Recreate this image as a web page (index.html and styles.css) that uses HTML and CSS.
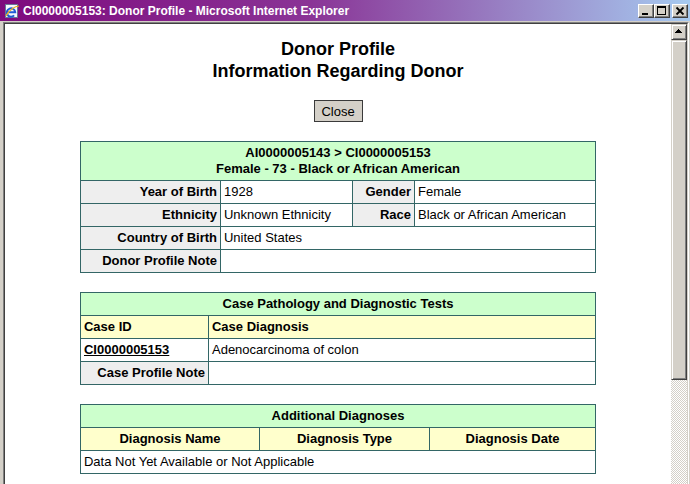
FILE: index.html
```html
<!DOCTYPE html>
<html>
<head>
<meta charset="utf-8">
<title>CI0000005153: Donor Profile</title>
<link rel="stylesheet" href="styles.css">
</head>
<body>
<div class="window">
  <div class="titlebar">
    <svg class="ie-icon" viewBox="0 0 16 16" width="16" height="16">
      <rect x="1.5" y="1.5" width="12" height="13" fill="#f4f8ff" stroke="#6a7a94"/>
      <path d="M3 9.2h8.2a4.2 4.2 0 1 0 -1.1 3.2" fill="none" stroke="#1f5bd6" stroke-width="2"/>
      <path d="M2 13c3-6 9-10 13-10" fill="none" stroke="#f0b020" stroke-width="1.2"/>
    </svg>
    <span class="title-text">CI0000005153: Donor Profile - Microsoft Internet Explorer</span>
    <div class="caption-buttons">
      <span class="cap-btn">
        <svg viewBox="0 0 14 12" width="14" height="12" shape-rendering="crispEdges"><rect x="3" y="8" width="6" height="2" fill="#000"/></svg>
      </span>
      <span class="cap-btn">
        <svg viewBox="0 0 14 12" width="14" height="12" shape-rendering="crispEdges"><path d="M2 1h9v9h-9z M3 3v6h7v-6z" fill="#000" fill-rule="evenodd"/></svg>
      </span>
      <span class="cap-btn cap-close">
        <svg viewBox="0 0 14 12" width="14" height="12"><path d="M3.5 2.5l7 7M10.5 2.5l-7 7" stroke="#000" stroke-width="1.8"/></svg>
      </span>
    </div>
  </div>
  <div class="frame">
    <div class="sunken-outer">
      <div class="sunken-inner">
        <div class="page">
          <h1 class="page-title">Donor Profile<br>Information Regarding Donor</h1>
          <div class="actions"><button class="close-btn" type="button">Close</button></div>

          <table class="data-table">
            <colgroup><col class="c1a"><col class="c1b"><col class="c1c"><col class="c1d"></colgroup>
            <tr><th class="hdr" colspan="4">AI0000005143 &gt; CI0000005153<br>Female - 73 - Black or African American</th></tr>
            <tr><th class="label">Year of Birth</th><td>1928</td><th class="label">Gender</th><td>Female</td></tr>
            <tr><th class="label">Ethnicity</th><td>Unknown Ethnicity</td><th class="label">Race</th><td>Black or African American</td></tr>
            <tr><th class="label">Country of Birth</th><td colspan="3">United States</td></tr>
            <tr><th class="label">Donor Profile Note</th><td colspan="3"></td></tr>
          </table>

          <table class="data-table">
            <colgroup><col class="c2a"><col class="c2b"></colgroup>
            <tr><th class="hdr" colspan="2">Case Pathology and Diagnostic Tests</th></tr>
            <tr><th class="sub left">Case ID</th><th class="sub left">Case Diagnosis</th></tr>
            <tr><td><a class="case-link" href="#">CI0000005153</a></td><td>Adenocarcinoma of colon</td></tr>
            <tr><th class="label">Case Profile Note</th><td></td></tr>
          </table>

          <table class="data-table">
            <colgroup><col class="c3a"><col class="c3b"><col class="c3c"></colgroup>
            <tr><th class="hdr" colspan="3">Additional Diagnoses</th></tr>
            <tr><th class="sub">Diagnosis Name</th><th class="sub">Diagnosis Type</th><th class="sub">Diagnosis Date</th></tr>
            <tr><td colspan="3">Data Not Yet Available or Not Applicable</td></tr>
          </table>
        </div>
        <div class="scrollbar">
          <div class="sb-btn">
            <svg viewBox="0 0 14 14" width="14" height="14" shape-rendering="crispEdges"><path d="M6 4h1v1h-1z M5 5h3v1h-3z M4 6h5v1h-5z M3 7h7v1h-7z" fill="#000"/></svg>
          </div>
          <div class="sb-thumb"></div>
          <div class="sb-track"></div>
        </div>
      </div>
    </div>
  </div>
</div>
</body>
</html>
```
FILE: styles.css
```css
html, body {
  margin: 0;
  padding: 0;
}
body {
  width: 690px;
  height: 484px;
  overflow: hidden;
  font-family: "Liberation Sans", Arial, sans-serif;
  color: #000;
}
.window {
  width: 690px;
  height: 484px;
  background: #d4d0c8;
  display: flex;
  flex-direction: column;
  overflow: hidden;
}
.titlebar {
  height: 21px;
  flex: none;
  box-sizing: border-box;
  padding-left: 4px;
  display: flex;
  align-items: center;
  background: linear-gradient(to right, #7e0a7e 0%, #8a3496 45%, #a6caf0 100%);
}
.ie-icon {
  flex: none;
  display: block;
}
.title-text {
  flex: 1;
  margin-left: 3px;
  color: #fff;
  font-weight: bold;
  font-size: 12px;
  white-space: nowrap;
}
.caption-buttons {
  display: flex;
  margin-right: 2px;
}
.cap-btn {
  width: 16px;
  height: 14px;
  box-sizing: border-box;
  background: #d4d0c8;
  border: 1px solid;
  border-color: #fff #404040 #404040 #fff;
  box-shadow: inset -1px -1px #808080;
  display: flex;
  align-items: center;
  justify-content: center;
}
.cap-btn svg { display: block; }
.cap-close { margin-left: 2px; }

.frame {
  flex: 1;
  min-height: 0;
  display: flex;
  padding: 1px 1px 0 3px;
}
.sunken-outer {
  flex: 1;
  display: flex;
  min-width: 0;
  border: 1px solid;
  border-bottom: none;
  border-color: #808080 #fff #fff #808080;
}
.sunken-inner {
  flex: 1;
  display: flex;
  min-width: 0;
  border: 1px solid;
  border-bottom: none;
  border-color: #404040 #d4d0c8 #d4d0c8 #404040;
}
.page {
  flex: 1;
  min-width: 0;
  background: #fff;
  overflow: hidden;
  padding-top: 14px;
}
.page-title {
  margin: 0;
  font-size: 18px;
  line-height: 22px;
  font-weight: bold;
  text-align: center;
}
.actions {
  display: flex;
  justify-content: center;
  margin-top: 18px;
}
.close-btn {
  width: 49px;
  height: 22px;
  box-sizing: border-box;
  padding: 0;
  margin: 0;
  font-family: "Liberation Sans", Arial, sans-serif;
  font-size: 13px;
  color: #000;
  background: #d4d0c8;
  border: 1px solid #3a3a3a;
  border-radius: 0;
}

.data-table {
  width: 515px;
  margin: 19px auto 0;
  border-collapse: collapse;
  table-layout: fixed;
  font-size: 13px;
  line-height: 16px;
}
.data-table + .data-table { margin-top: 19px; }
.data-table th,
.data-table td {
  border: 1px solid #336666;
  padding: 3px 3px;
  text-align: left;
  vertical-align: middle;
  font-weight: normal;
}
.data-table th { font-weight: bold; }
.data-table .hdr {
  background: #ccffcc;
  text-align: center;
}
.data-table .sub {
  background: #ffffcc;
  text-align: center;
}
.data-table .sub.left { text-align: left; }
.data-table .label {
  background: #eeeeee;
  text-align: right;
}
.case-link {
  color: #000;
  font-weight: bold;
  text-decoration: underline;
}
.c1a { width: 140px; }
.c1b { width: 132px; }
.c1c { width: 62px; }
.c1d { width: 181px; }
.c2a { width: 128px; }
.c2b { width: 387px; }
.c3a { width: 179px; }
.c3b { width: 170px; }
.c3c { width: 166px; }

.scrollbar {
  width: 16px;
  flex: none;
  display: flex;
  flex-direction: column;
}
.sb-btn,
.sb-thumb {
  box-sizing: border-box;
  background: #d4d0c8;
  border: 1px solid;
  border-color: #d4d0c8 #404040 #404040 #d4d0c8;
  box-shadow: inset 1px 1px #fff, inset -1px -1px #808080;
}
.sb-btn {
  height: 16px;
  flex: none;
  display: flex;
  align-items: center;
  justify-content: center;
}
.sb-btn svg { display: block; }
.sb-thumb {
  height: 340px;
  flex: none;
}
.sb-track {
  flex: 1;
  background-color: #fff;
  background-image: repeating-conic-gradient(#d4d0c8 0 25%, #fff 0 50%);
  background-size: 2px 2px;
}
```
